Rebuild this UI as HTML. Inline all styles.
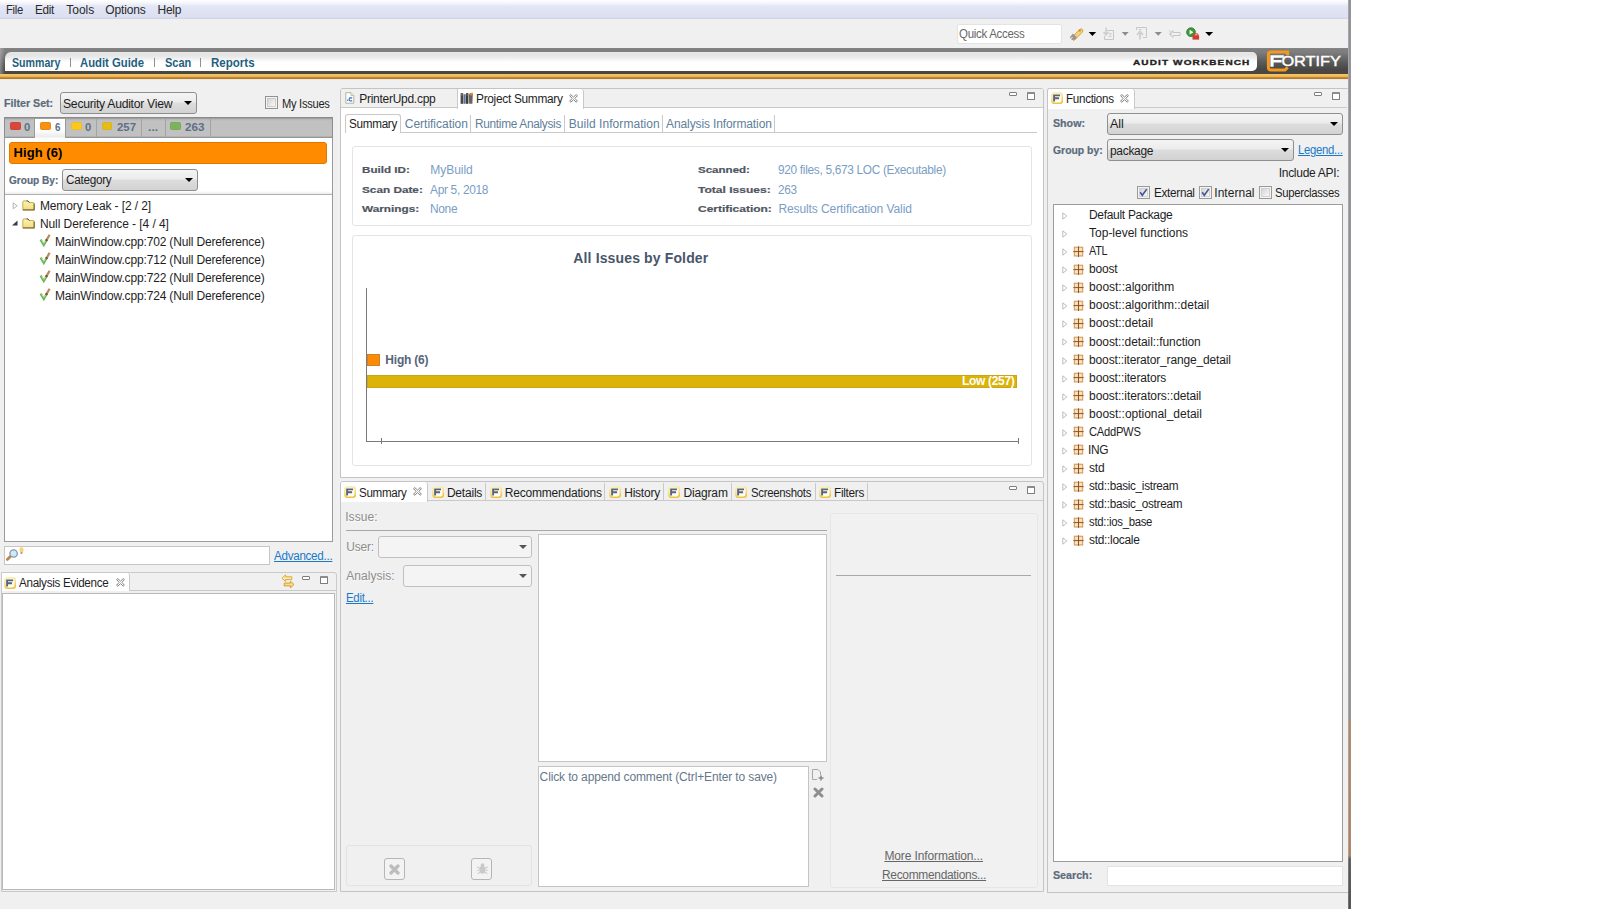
<!DOCTYPE html>
<html><head><meta charset="utf-8">
<style>
*{box-sizing:border-box;margin:0;padding:0}
html,body{width:1620px;height:909px;overflow:hidden;background:#fff}
body{font-family:"Liberation Sans",sans-serif;font-size:12px;color:#1e1e1e;position:relative}
.a{position:absolute}
.t{position:absolute;white-space:nowrap;line-height:14px;height:14px;font-size:12px}
#win{position:absolute;left:0;top:0;width:1348px;height:909px;background:#f0f0f0;overflow:hidden}
.b{font-weight:bold}
.lbl{font-weight:bold;color:#5b6b7b;font-size:10.4px;-webkit-text-stroke:0.2px #5b6b7b}
.sel{position:absolute;border:1px solid #8e8f8f;border-radius:3px;background:linear-gradient(#f4f4f4,#ececec 45%,#dddddd 50%,#d2d2d2)}
.sel .t{left:4px;top:3px;font-size:12.5px}
.sel:after{content:"";position:absolute;right:4px;top:8px;border:4px solid transparent;border-top:4px solid #000;border-bottom:0}
.sel.dis{border-color:#c0c0c0;background:#f4f4f4}
.sel.dis:after{border-top-color:#555}
.ft{font-size:10px;color:#5d6f88}
.sq{width:10.6px;height:7.8px;border:1px solid;border-radius:1.5px}
.dl{color:#8d8d8d;text-shadow:0.6px 0.6px 0 #fbfbfb}
.m{color:#2a2a2a}
.cb{position:absolute;width:13px;height:13px;border:1px solid #8e8f8f;background:linear-gradient(135deg,#dcdcdc,#f8f8f8 60%,#fff)}
.link{color:#1a78c8;text-decoration:underline}
.tabbar{position:absolute;border:1px solid #c9c9c9;border-bottom:none;background:#f0f0f0}
.tab{position:absolute;top:0;height:19px;border-right:1px solid #c9c9c9}
.tab.on{background:#fff}
.val{color:#7a9dc6;font-size:12px}
.il{font-weight:bold;color:#50565f;font-size:9.6px;-webkit-text-stroke:0.2px #50565f}
.mm{position:absolute;width:8px;height:4px;border:1px solid #7e7e7e;border-radius:1px;background:#fff}
.mx{position:absolute;width:8px;height:8px;border:1px solid #7e7e7e;border-top:2px solid #8c8c8c;border-radius:1px;background:#fff}
.tw{position:absolute;width:0;height:0;border:3.5px solid transparent;border-left:4px solid #b0b0b0;border-right:0}
.tw:after{content:"";position:absolute;left:-3px;top:-2px;border:2px solid transparent;border-left:2px solid #fff;border-right:0}
</style></head><body>
<div id="win">
<svg width="0" height="0" style="position:absolute"><defs>
<linearGradient id="fig" x1="0" y1="0" x2="0.25" y2="1"><stop offset="0" stop-color="#fbefbc"/><stop offset="0.55" stop-color="#f8e08c"/><stop offset="1" stop-color="#efc444"/></linearGradient>
<linearGradient id="cbg" x1="0" y1="0" x2="1" y2="1"><stop offset="0" stop-color="#d2d2d2"/><stop offset="1" stop-color="#fbfbfb"/></linearGradient>
<symbol id="fi" viewBox="0 0 12 12"><rect x="0.9" y="0.9" width="10.4" height="10.4" rx="2.6" fill="#fffdf3" stroke="url(#fig)" stroke-width="1.7"/><path d="M3.1 9.4 V3.4 H9.1 M3.1 6.3 H8.1" fill="none" stroke="#596479" stroke-width="1.9"/></symbol>
<symbol id="cx" viewBox="0 0 9 9"><path d="M0.6 1.6 L1.8 0.6 L4.5 3.1 L7.2 0.6 L8.4 1.6 L5.9 4.4 L8.4 7.2 L7.2 8.2 L4.5 5.7 L1.8 8.2 L0.6 7.2 L3.1 4.4 Z" fill="#fff" stroke="#828282" stroke-width="1"/></symbol>
<symbol id="pk" viewBox="0 0 11 11"><rect x="1.3" y="1.2" width="8.4" height="8.8" fill="#f6d3a4" stroke="#d0975a" stroke-width="1"/><path d="M5.5 0.3 V10.9 M0.4 5.6 H10.6" stroke="#8e5526" stroke-width="1"/><path d="M2.3 2.2 H4.7 V4.6 H2.3 Z M6.3 2.2 H8.7 V4.6 H6.3 Z M2.3 6.6 H4.7 V9 H2.3 Z M6.3 6.6 H8.7 V9 H6.3 Z" fill="#fbe6c8"/></symbol>
<symbol id="ar" viewBox="0 0 6 8"><path d="M0.8 0.8 L4.8 4 L0.8 7.2 Z" fill="#fff" stroke="#bdbdbd" stroke-width="1"/></symbol>
</defs></svg>
<!-- MENUBAR -->
<div class="a" id="menubar" style="left:0;top:0;width:1348px;height:19px;background:linear-gradient(#ffffff 0,#f6f7fc 14%,#e4e7f5 32%,#dee2f2 60%,#dce0f0 88%,#cfd3e4 100%)"></div>
<div class="t m" id="m0" style="left:5.8px;top:2.8px;transform-origin:0 50%;transform:scaleX(0.933);letter-spacing:-0.30px">File</div>
<div class="t m" id="m1" style="left:34.7px;top:2.8px;transform-origin:0 50%;transform:scaleX(0.978);letter-spacing:-0.30px">Edit</div>
<div class="t m" id="m2" style="left:66.3px;top:2.8px;letter-spacing:-0.03px">Tools</div>
<div class="t m" id="m3" style="left:105.3px;top:2.8px;letter-spacing:-0.14px">Options</div>
<div class="t m" id="m4" style="left:157.5px;top:2.8px;letter-spacing:-0.27px">Help</div>
<!-- TOOLBAR -->
<div class="a" style="left:957px;top:24px;width:105px;height:20px;background:#fff;border:1px solid #e3e3e3;border-radius:2px"></div>
<div class="t" id="qa" style="left:958.5px;top:27.0px;transform-origin:0 50%;transform:scaleX(0.956);letter-spacing:-0.30px;color:#666">Quick Access</div>
<!-- toolbar icons -->
<svg class="a" id="tbicons" style="left:1064px;top:22px" width="160" height="24" viewBox="0 0 160 24">
<g><path d="M7 16.5 L15.5 7.5 Q17.5 6 18.5 7.5 Q19.5 9 18 10.5 L10 18.5 Z" fill="#f6d27a" stroke="#d9a03c" stroke-width="1"/><path d="M9 11.5 L13 15.5 L10.5 18 L6.5 17 L6 15 Z" fill="#9a9590"/><circle cx="15.8" cy="8.6" r="1.1" fill="#c98a2a"/><path d="M6 17.5 L8.5 15" stroke="#fff" stroke-width="1"/></g>
<path d="M24.7 10 H32.1 L28.4 14 Z" fill="#000"/>
<g stroke="#c6c6c6" fill="none"><path d="M43 8.5 H49.5 V17.5 H40.5 V14"/><path d="M42 5.5 V12 M39.5 10 L42 13 L44.5 10" stroke="#cfcfcf" stroke-width="1.6"/><path d="M45 11.5 H47.5 L45 14.5 H47.5" stroke="#d0d0d0"/></g>
<path d="M57.8 10 H64.7 L61.2 13.8 Z" fill="#8c8c8c"/>
<g stroke="#c6c6c6" fill="none"><path d="M72.5 8 V5.5 H82.5 V15.5 H79"/><path d="M76 17.5 V10.5 M73 13 L76 9.5 L79 13" stroke="#cfcfcf" stroke-width="1.8"/><path d="M74.5 7.5 H77.5" stroke="#d0d0d0"/></g>
<path d="M90.7 10 H97.8 L94.2 13.8 Z" fill="#8c8c8c"/>
<g><path d="M109 8.5 L105.5 12 L109 15.5 V13.5 H116 V10.5 H109 Z" fill="#f2f2f2" stroke="#c4c4c4"/><path d="M105.5 8.5 l1 1.5 l1.6 .2 l-1.2 1.2 l.3 1.7 l-1.7 -.9" fill="none" stroke="#c9c9c9" stroke-width="1"/></g>
<g><circle cx="127" cy="10.2" r="4.4" fill="#3d9a3a" stroke="#2a7a2a" stroke-width=".8"/><path d="M125.6 7.8 L129.4 10.2 L125.6 12.6 Z" fill="#fff"/><rect x="128.5" y="13.2" width="6.6" height="4.4" fill="#d43a30"/><path d="M129.8 13.2 V11.9 H133.8 V13.2" fill="none" stroke="#d43a30" stroke-width="1"/></g>
<path d="M141.2 10 H149.1 L145.1 14 Z" fill="#000"/>
</svg>
<!-- BAND -->
<div class="a" id="band" style="left:0;top:48px;width:1348px;height:26px;background:linear-gradient(90deg,rgba(190,190,190,.55),rgba(120,120,120,0) 5px),linear-gradient(#888 0,#808080 1px,#7e7e7e 4px,#6c6c6c 9px,#585858 15px,#484848 21px,#4a4640 23px,#4a4640 26px)"></div>
<div class="a" style="left:0;top:74px;width:1348px;height:6px;background:linear-gradient(#eec670 0,#f1c062 1.6px,#e9ab42 2.8px,#bb8026 3.8px,#a9783a 4.6px,#efe4d6 5.2px,#f0eeea 6px)"></div>
<div class="a" style="left:5px;top:52px;width:1252px;height:19px;background:linear-gradient(#e9e9e9 0,#e3e3e3 2.5px,#ededed 6px,#fbfbfb 9px,#fff 10.5px);border-radius:6px 5px 5px 0"></div>
<div class="t b nav sx" id="nav1" style="left:12.3px;top:55.7px;transform-origin:0 50%;transform:scaleX(0.885);color:#1f5f80">Summary</div>
<div class="a" style="left:70px;top:58px;width:1px;height:9px;background:#909090"></div>
<div class="t b nav sx" id="nav2" style="left:80.4px;top:55.7px;transform-origin:0 50%;transform:scaleX(0.941);color:#1f5f80">Audit Guide</div>
<div class="a" style="left:154px;top:58px;width:1px;height:9px;background:#909090"></div>
<div class="t b nav sx" id="nav3" style="left:165.0px;top:55.7px;transform-origin:0 50%;transform:scaleX(0.917);color:#1f5f80">Scan</div>
<div class="a" style="left:200px;top:58px;width:1px;height:9px;background:#909090"></div>
<div class="t b nav sx" id="nav4" style="left:210.8px;top:55.7px;transform-origin:0 50%;transform:scaleX(0.961);color:#1f5f80">Reports</div>
<div class="t b" id="awb" style="left:1132.6px;top:55.6px;font-size:8px;letter-spacing:0.9px;color:#222;-webkit-text-stroke:0.35px #222;transform-origin:0 50%;transform:scaleX(1.25)">AUDIT WORKBENCH</div>
<!-- fortify logo -->
<svg class="a" style="left:1264px;top:48px" width="84" height="26" viewBox="0 0 84 26">
<path d="M23.6 7 V4 H7 Q4.4 4 4.4 6.6 V19.4 Q4.4 22 7 22 H21 L23.6 19.4" fill="none" stroke="#f39a1e" stroke-width="3"/>
<path d="M6.4 18.7 V7.2 H19.8 V9.8 H9.6 V12 H17.6 V14.4 H9.6 V18.7 Z" fill="#fff"/>
<text x="17.4" y="18.4" font-family="Liberation Sans" font-size="14" fill="#fff" textLength="59.5" lengthAdjust="spacingAndGlyphs" stroke="#fff" stroke-width="0.4">ORTIFY</text>
</svg>
<!-- LEFT PANEL -->
<div class="t lbl" id="fs" style="left:4.2px;top:96.7px;transform-origin:0 50%;transform:scaleX(1.026)">Filter Set:</div>
<div class="sel" style="left:60px;top:92px;width:137px;height:22px"><div class="t" id="s1" style="left:2.0px;top:4.2px;transform-origin:0 50%;transform:scaleX(0.979);letter-spacing:-0.30px">Security Auditor View</div></div>
<svg class="a" style="left:265px;top:96px" width="13" height="13" viewBox="0 0 13 13"><rect x="0.5" y="0.5" width="12" height="12" fill="#f4f4f4" stroke="#929292"/><rect x="2.5" y="2.5" width="8" height="8" fill="url(#cbg)" stroke="#c4c4c4" stroke-width=".8"/></svg>
<div class="t" id="myi" style="left:281.6px;top:97.0px;transform-origin:0 50%;transform:scaleX(0.928);letter-spacing:-0.30px">My Issues</div>
<!-- folder tabs -->
<div class="a" style="left:4px;top:117px;width:329px;height:21px;background:linear-gradient(#858585 0,#8e8e8e 1px,#b4b4b4 2px,#c1c1c1 4px,#c1c1c1 19px,#a2a2a2 20px,#8c8c8c 21px);border-left:1px solid #8e8e8e;border-right:1px solid #8e8e8e"></div>
<div class="a" style="left:35px;top:119px;width:30px;height:20px;background:linear-gradient(#fff 0,#fff 55%,#ededed 88%,#fff 100%)"></div>
<div class="a" style="left:34px;top:119px;width:1px;height:18px;background:#9a9a9a"></div>
<div class="a" style="left:65px;top:119px;width:1px;height:18px;background:#9a9a9a"></div>
<div class="a" style="left:96px;top:119px;width:1px;height:18px;background:#a4a4a4"></div>
<div class="a" style="left:141px;top:119px;width:1px;height:18px;background:#a4a4a4"></div>
<div class="a" style="left:165px;top:119px;width:1px;height:18px;background:#a4a4a4"></div>
<div class="a" style="left:210px;top:119px;width:1px;height:18px;background:#a4a4a4"></div>
<div class="a sq" style="left:10px;top:122px;background:#d9473b;border-color:#c8463c"></div>
<div class="t b ft sx" id="f0" style="left:23.7px;top:120.5px;transform-origin:0 50%;transform:scaleX(1.117)">0</div>
<div class="a sq" style="left:40.3px;top:122px;background:#fb8f0e;border-color:#e48a1a"></div>
<div class="t b ft sx" id="f1" style="left:55.0px;top:120.5px;transform-origin:0 50%;transform:scaleX(0.983)">6</div>
<div class="a sq" style="left:71.2px;top:122px;background:#fdc81c;border-color:#e9bd2c"></div>
<div class="t b ft sx" id="f2" style="left:85.0px;top:120.5px;transform-origin:0 50%;transform:scaleX(1.117)">0</div>
<div class="a sq" style="left:101.6px;top:122px;background:#e5bd12;border-color:#d5b32a"></div>
<div class="t b ft sx" id="f3" style="left:116.5px;top:120.5px;transform-origin:0 50%;transform:scaleX(1.139)">257</div>
<div class="t b ft sx" id="f4" style="left:148.0px;top:120.5px;transform-origin:0 50%;transform:scaleX(1.215)">...</div>
<div class="a sq" style="left:170.2px;top:122px;background:#7cb45c;border-color:#7aa860"></div>
<div class="t b ft sx" id="f5" style="left:185.3px;top:120.5px;transform-origin:0 50%;transform:scaleX(1.162)">263</div>
<!-- body -->
<div class="a" style="left:4px;top:138px;width:329px;height:404px;background:#fff;border:1px solid #9a9a9a;border-top:none"></div>
<div class="a" style="left:9px;top:142px;width:318px;height:22px;background:#ff8c00;border:1px solid #e07800;border-radius:3px"></div>
<div class="t b" id="high" style="left:13.6px;top:145.5px;letter-spacing:0.04px;font-size:13px;color:#000">High (6)</div>
<div class="t lbl" id="gb" style="left:8.8px;top:173.5px;transform-origin:0 50%;transform:scaleX(0.971)">Group By:</div>
<div class="sel" style="left:62px;top:169px;width:136px;height:22px"><div class="t" id="s2" style="left:2.5px;top:3.3px;transform-origin:0 50%;transform:scaleX(0.940);letter-spacing:-0.30px">Category</div></div>
<div class="a" style="left:5px;top:194px;width:327px;height:1px;background:#b0b0b0"></div>
<div class="a" style="left:5px;top:191px;width:327px;height:3px;background:linear-gradient(#fff,#ececec)"></div>
<!-- tree -->
<svg class="a" style="left:12px;top:202px" width="7" height="8" viewBox="0 0 7 8"><path d="M1.2 0.8 L5.2 3.8 L1.2 6.8 Z" fill="#fff" stroke="#b4b4b4" stroke-width="1"/></svg>
<svg class="a" style="left:11px;top:220px" width="8" height="7" viewBox="0 0 8 7"><path d="M6.5 0.6 V5.4 H1 Z" fill="#3a3a3a"/></svg>
<svg class="a fold" style="left:22px;top:199.6px" width="13" height="11" viewBox="0 0 14 12"><defs><linearGradient id="fg1" x1="0" y1="0" x2="0" y2="1"><stop offset="0" stop-color="#fdf3b4"/><stop offset="1" stop-color="#f1dc80"/></linearGradient></defs><path d="M0.8 2.2 Q0.8 1 2 1 H6.2 L8 2.8 H12 Q13 2.8 13 3.8 V10.6 H0.8 Z" fill="url(#fg1)" stroke="#c4a548" stroke-width="1"/><path d="M0.8 10.8 H13.2 V3.8" fill="none" stroke="#6e5a28" stroke-width="1.1"/><path d="M5 1 H6.2 L8 2.8" fill="none" stroke="#4a3c1c" stroke-width="1"/></svg>
<svg class="a fold" style="left:22px;top:217.6px" width="13" height="11" viewBox="0 0 14 12"><defs><linearGradient id="fg2" x1="0" y1="0" x2="0" y2="1"><stop offset="0" stop-color="#fdf3b4"/><stop offset="1" stop-color="#f1dc80"/></linearGradient></defs><path d="M0.8 2.2 Q0.8 1 2 1 H6.2 L8 2.8 H12 Q13 2.8 13 3.8 V10.6 H0.8 Z" fill="url(#fg2)" stroke="#c4a548" stroke-width="1"/><path d="M0.8 10.8 H13.2 V3.8" fill="none" stroke="#6e5a28" stroke-width="1.1"/><path d="M5 1 H6.2 L8 2.8" fill="none" stroke="#4a3c1c" stroke-width="1"/></svg>
<div class="t tr" id="tr1" style="left:39.9px;top:199.0px;letter-spacing:-0.11px">Memory Leak - [2 / 2]</div>
<div class="t tr" id="tr2" style="left:39.9px;top:217.0px;letter-spacing:-0.07px">Null Dereference - [4 / 4]</div>
<div class="t tr" id="tr3" style="left:55.0px;top:235.0px;letter-spacing:-0.16px">MainWindow.cpp:702 (Null Dereference)</div>
<div class="t tr" id="tr4" style="left:55.0px;top:253.0px;letter-spacing:-0.16px">MainWindow.cpp:712 (Null Dereference)</div>
<div class="t tr" id="tr5" style="left:55.0px;top:271.0px;letter-spacing:-0.16px">MainWindow.cpp:722 (Null Dereference)</div>
<div class="t tr" id="tr6" style="left:55.0px;top:289.0px;letter-spacing:-0.16px">MainWindow.cpp:724 (Null Dereference)</div>
<svg class="a" style="left:39px;top:234px" width="13" height="68" viewBox="0 0 13 68">
<g id="ck"><path d="M1.6 5.6 L4.8 11 L8 5.2" fill="none" stroke="#6cb556" stroke-width="2.3" stroke-linejoin="miter"/><path d="M2.6 6.2 L4.8 9.4 L7 5.8" fill="none" stroke="#b9e4a6" stroke-width="1"/><path d="M7.4 6.4 L10.6 0.8" stroke="#bd8756" stroke-width="2.2"/><path d="M7 7 L8 5.4" stroke="#6a5040" stroke-width="2.2"/></g>
<use href="#ck" y="18"/><use href="#ck" y="36"/><use href="#ck" y="54"/>
</svg>
<!-- search -->
<div class="a" style="left:4px;top:546px;width:266px;height:19px;background:#fff;border:1px solid #c6c6c6"></div>
<svg class="a" style="left:4px;top:546px" width="22" height="18" viewBox="0 0 22 18"><path d="M6.4 10.4 L3.3 13.4" stroke="#bd8650" stroke-width="2.8" stroke-linecap="round"/><circle cx="9.6" cy="7.5" r="3.7" fill="#cdeaf8" stroke="#8898a8" stroke-width="1.3"/><path d="M17.5 1.2 Q20 2.2 19 5 L18.5 6.2 H16.5 L16 5 Q15 2.2 17.5 1.2 Z" fill="#fbd777" stroke="#e8c060" stroke-width=".5"/><rect x="16.6" y="6.2" width="1.8" height="1.6" fill="#8a8a92"/></svg>
<div class="t link" id="adv" style="left:274.3px;top:549.4px;transform-origin:0 50%;transform:scaleX(0.971);letter-spacing:-0.30px">Advanced...</div>
<!-- Analysis Evidence -->
<div class="a" style="left:1px;top:572px;width:336px;height:320px;border:1px solid #c9c9c9;border-radius:0 3px 0 0;background:#f0f0f0"></div>
<div class="a" style="left:2px;top:573px;width:128px;height:18px;background:#fff;border-right:1px solid #c9c9c9;border-radius:0 3px 0 0"></div>
<div class="a" style="left:130px;top:590px;width:206px;height:1px;background:#c9c9c9"></div>
<svg class="a" style="left:4px;top:576.5px" width="12" height="12"><use href="#fi"/></svg>
<div class="t" id="ae" style="left:19.2px;top:575.6px;transform-origin:0 50%;transform:scaleX(0.969);letter-spacing:-0.30px">Analysis Evidence</div>
<svg class="a" style="left:115.5px;top:578px" width="9" height="9"><use href="#cx"/></svg>
<div class="a" style="left:2px;top:593px;width:333px;height:297px;background:#fff;border:1px solid #b9b9b9"></div>
<svg class="a" style="left:281px;top:574px" width="14" height="15" viewBox="0 0 14 15"><path d="M1 4.2 L4.6 0.9 V2.8 H10.8 V5.6 H4.6 V7.5 Z" fill="#fde9ae" stroke="#dba93f" stroke-width="1"/><path d="M13 10.5 L9.4 7.2 V9.1 H3.2 V11.9 H9.4 V13.8 Z" fill="#fbd98a" stroke="#d39e36" stroke-width="1"/></svg>
<div class="mm" style="left:302px;top:576px"></div>
<div class="mx" style="left:320px;top:576px"></div>
<!-- CENTER TOP PANEL -->
<div class="a" style="left:340px;top:88px;width:704px;height:390px;border:1px solid #c4c4c4;border-radius:3px 3px 0 0;background:#fff"></div>
<div class="a" style="left:341px;top:89px;width:702px;height:19px;background:#f0f0f0;border-bottom:1px solid #c9c9c9;border-radius:2px 2px 0 0"></div>
<div class="a" style="left:457px;top:89px;width:127px;height:20px;background:#fff;border-left:1px solid #c9c9c9;border-right:1px solid #c9c9c9;border-radius:0 3px 0 0"></div>
<svg class="a" style="left:344.6px;top:92px" width="10" height="12" viewBox="0 0 10 12"><path d="M0.8 0.7 H6 L8.8 3.5 V11.2 H0.8 Z" fill="#fff" stroke="#b9b0a0" stroke-width="1"/><path d="M6 0.7 V3.5 H8.8" fill="#f2ede2" stroke="#b9b0a0" stroke-width=".8"/><rect x="2" y="7.6" width="1.3" height="1.3" fill="#3d7cc9"/><path d="M7.2 6.1 Q4.2 5 4.2 7.3 Q4.2 9.6 7.2 8.6" fill="none" stroke="#3d7cc9" stroke-width="1.3"/></svg>
<div class="t" id="ct1" style="left:359.3px;top:91.6px;letter-spacing:-0.28px">PrinterUpd.cpp</div>
<svg class="a" style="left:459.5px;top:91.5px" width="14" height="13" viewBox="0 0 14 13"><rect x="0.6" y="1.2" width="2.6" height="10.6" fill="#474747"/><rect x="3.5" y="2.2" width="2.2" height="9.6" fill="#5f7099"/><rect x="6" y="1.2" width="2.4" height="10.6" fill="#3b3b3b"/><path d="M8.8 2.6 L11 1 L12.8 1.6 L12.4 11.8 L9.2 11.8 Z" fill="#6b6258"/><path d="M9.4 1.4 L12.6 0.6 L12.8 3.4 L10.4 3.6 Z" fill="#d08a3c"/><rect x="1.1" y="2.4" width="1.6" height="1" fill="#8a8a8a"/><rect x="6.4" y="2.4" width="1.6" height="1" fill="#8a6a4a"/></svg>
<div class="t" id="ct2" style="left:476.4px;top:91.6px;transform-origin:0 50%;transform:scaleX(0.990);letter-spacing:-0.30px">Project Summary</div>
<svg class="a" style="left:569px;top:94px" width="9" height="9"><use href="#cx"/></svg>
<div class="mm" style="left:1009px;top:92px"></div>
<div class="mx" style="left:1027px;top:92px"></div>
<!-- inner tabs -->
<div class="a" style="left:345px;top:132px;width:692px;height:1px;background:#c9c9c9"></div>
<div class="a" style="left:345px;top:114px;width:56px;height:19px;background:#fff;border:1px solid #c9c9c9;border-bottom:none;border-radius:3px 3px 0 0"></div>
<div class="a" style="left:470px;top:115px;width:1px;height:17px;background:#c9c9c9"></div>
<div class="a" style="left:564px;top:115px;width:1px;height:17px;background:#c9c9c9"></div>
<div class="a" style="left:662px;top:115px;width:1px;height:17px;background:#c9c9c9"></div>
<div class="a" style="left:774px;top:115px;width:1px;height:17px;background:#c9c9c9"></div>
<div class="t it" id="it1" style="left:349.4px;top:116.6px;transform-origin:0 50%;transform:scaleX(0.975);letter-spacing:-0.30px;color:#222">Summary</div>
<div class="t it" id="it2" style="left:404.8px;top:116.6px;letter-spacing:-0.02px;color:#60809a">Certification</div>
<div class="t it" id="it3" style="left:474.9px;top:116.6px;transform-origin:0 50%;transform:scaleX(0.986);letter-spacing:-0.30px;color:#60809a">Runtime Analysis</div>
<div class="t it" id="it4" style="left:568.7px;top:116.6px;letter-spacing:0.06px;color:#60809a">Build Information</div>
<div class="t it" id="it5" style="left:666.1px;top:116.6px;letter-spacing:-0.12px;color:#60809a">Analysis Information</div>
<!-- info box -->
<div class="a" style="left:352px;top:146px;width:680px;height:80px;border:1px solid #e4e4e4;border-radius:3px;background:#fff"></div>
<div class="t il" id="il1" style="left:362.1px;top:162.7px;transform-origin:0 50%;transform:scaleX(1.211)">Build ID:</div>
<div class="t il" id="il2" style="left:362.1px;top:182.6px;transform-origin:0 50%;transform:scaleX(1.227)">Scan Date:</div>
<div class="t il" id="il3" style="left:362.1px;top:202.4px;transform-origin:0 50%;transform:scaleX(1.228)">Warnings:</div>
<div class="t val" id="v1" style="left:430.3px;top:163.0px;letter-spacing:-0.03px">MyBuild</div>
<div class="t val" id="v2" style="left:430.3px;top:182.6px;transform-origin:0 50%;transform:scaleX(0.990);letter-spacing:-0.30px">Apr 5, 2018</div>
<div class="t val" id="v3" style="left:430.3px;top:202.4px;transform-origin:0 50%;transform:scaleX(0.992);letter-spacing:-0.30px">None</div>
<div class="t il" id="il4" style="left:698.2px;top:162.7px;transform-origin:0 50%;transform:scaleX(1.203)">Scanned:</div>
<div class="t il" id="il5" style="left:698.2px;top:182.6px;transform-origin:0 50%;transform:scaleX(1.256)">Total Issues:</div>
<div class="t il" id="il6" style="left:698.2px;top:202.4px;transform-origin:0 50%;transform:scaleX(1.248)">Certification:</div>
<div class="t val" id="v4" style="left:778.4px;top:163.0px;transform-origin:0 50%;transform:scaleX(0.986);letter-spacing:-0.30px">920 files, 5,673 LOC (Executable)</div>
<div class="t val" id="v5" style="left:778.4px;top:182.6px;transform-origin:0 50%;transform:scaleX(0.977);letter-spacing:-0.30px">263</div>
<div class="t val" id="v6" style="left:778.4px;top:202.4px;letter-spacing:-0.09px">Results Certification Valid</div>
<!-- chart box -->
<div class="a" style="left:352px;top:235px;width:680px;height:231px;border:1px solid #e4e4e4;border-radius:3px;background:#fff"></div>
<div class="t b" id="ctitle" style="left:573.3px;top:250.7px;letter-spacing:0.14px;font-size:14px;color:#48566a">All Issues by Folder</div>
<div class="a" style="left:366px;top:288px;width:1px;height:154px;background:#7a7a7a"></div>
<div class="a" style="left:366px;top:441px;width:653px;height:1px;background:#7a7a7a"></div>
<div class="a" style="left:381px;top:438px;width:1px;height:6px;background:#7a7a7a"></div>
<div class="a" style="left:1018px;top:438px;width:1px;height:6px;background:#7a7a7a"></div>
<div class="a" style="left:366.5px;top:354px;width:13.5px;height:12px;background:#fb8a06;border:1px solid #d0802a"></div>
<div class="t b" id="hl" style="left:385.3px;top:352.9px;letter-spacing:-0.21px;color:#56657a">High (6)</div>
<div class="a" style="left:366.5px;top:375px;width:650.5px;height:12.5px;background:#dcb408;border:1px solid #c9a51a"></div>
<div class="t b" id="ll" style="left:961.9px;top:374.0px;transform-origin:0 50%;transform:scaleX(0.997);letter-spacing:-0.30px;color:#fff">Low (257)</div>
<!-- CENTER BOTTOM PANEL -->
<div class="a" style="left:340px;top:481px;width:704px;height:411px;border:1px solid #c4c4c4;border-radius:3px 3px 0 0;background:#f0f0f0"></div>
<div class="a" style="left:341px;top:500px;width:702px;height:1px;background:#c9c9c9"></div>
<div class="a" style="left:341px;top:482px;width:87px;height:20px;background:#fff;border-right:1px solid #c9c9c9;border-radius:2px 3px 0 0"></div>
<div class="a" style="left:485px;top:483px;width:1px;height:17px;background:#c9c9c9"></div>
<div class="a" style="left:604px;top:483px;width:1px;height:17px;background:#c9c9c9"></div>
<div class="a" style="left:663px;top:483px;width:1px;height:17px;background:#c9c9c9"></div>
<div class="a" style="left:731px;top:483px;width:1px;height:17px;background:#c9c9c9"></div>
<div class="a" style="left:815px;top:483px;width:1px;height:17px;background:#c9c9c9"></div>
<div class="a" style="left:867px;top:483px;width:1px;height:17px;background:#c9c9c9"></div>
<svg class="a" style="left:344px;top:486px" width="12" height="12"><use href="#fi"/></svg>
<svg class="a" style="left:432px;top:486px" width="12" height="12"><use href="#fi"/></svg>
<svg class="a" style="left:490px;top:486px" width="12" height="12"><use href="#fi"/></svg>
<svg class="a" style="left:609px;top:486px" width="12" height="12"><use href="#fi"/></svg>
<svg class="a" style="left:668px;top:486px" width="12" height="12"><use href="#fi"/></svg>
<svg class="a" style="left:735px;top:486px" width="12" height="12"><use href="#fi"/></svg>
<svg class="a" style="left:819px;top:486px" width="12" height="12"><use href="#fi"/></svg>
<div class="t bt" id="bt1" style="left:359.0px;top:485.9px;transform-origin:0 50%;transform:scaleX(0.967);letter-spacing:-0.30px">Summary</div>
<svg class="a" style="left:413px;top:487px" width="9" height="9"><use href="#cx"/></svg>
<div class="t bt" id="bt2" style="left:446.9px;top:485.9px;letter-spacing:-0.20px">Details</div>
<div class="t bt" id="bt3" style="left:504.7px;top:485.9px;letter-spacing:-0.20px">Recommendations</div>
<div class="t bt" id="bt4" style="left:624.2px;top:485.9px;letter-spacing:-0.22px">History</div>
<div class="t bt" id="bt5" style="left:683.4px;top:485.9px;letter-spacing:-0.14px">Diagram</div>
<div class="t bt" id="bt6" style="left:750.8px;top:485.9px;transform-origin:0 50%;transform:scaleX(0.948);letter-spacing:-0.30px">Screenshots</div>
<div class="t bt" id="bt7" style="left:833.8px;top:485.9px;transform-origin:0 50%;transform:scaleX(0.982);letter-spacing:-0.30px">Filters</div>
<div class="mm" style="left:1009px;top:486px"></div>
<div class="mx" style="left:1027px;top:486px"></div>
<div class="t dl" id="dl1" style="left:345.2px;top:510.0px;letter-spacing:0.08px">Issue:</div>
<div class="a" style="left:346px;top:530px;width:481px;height:1px;background:#a8a8a8"></div>
<div class="t dl" id="dl2" style="left:346.2px;top:540.1px;letter-spacing:-0.18px">User:</div>
<div class="sel dis" style="left:378px;top:536px;width:154px;height:22px"></div>
<div class="t dl" id="dl3" style="left:346.2px;top:568.9px;letter-spacing:0.05px">Analysis:</div>
<div class="sel dis" style="left:403px;top:565px;width:129px;height:22px"></div>
<div class="t link" id="edit" style="left:346.2px;top:591.4px;transform-origin:0 50%;transform:scaleX(0.956);letter-spacing:-0.30px">Edit...</div>
<div class="a" style="left:538px;top:534px;width:289px;height:228px;background:#fff;border:1px solid #c4c4c4"></div>
<div class="a" style="left:538px;top:766px;width:271px;height:121px;background:#fff;border:1px solid #c4c4c4"></div>
<div class="t" id="cm" style="left:539.6px;top:769.6px;letter-spacing:-0.13px;color:#66788a">Click to append comment (Ctrl+Enter to save)</div>
<svg class="a" style="left:811px;top:768px" width="14" height="14" viewBox="0 0 14 14"><path d="M1.5 1.5 H7 L9.5 4 V7 M1.5 1.5 V11.5 H6" fill="none" stroke="#a8a8a8"/><path d="M10 7.5 V12.5 M7.5 10 H12.5" stroke="#8a8a8a" stroke-width="1.6"/></svg>
<svg class="a" style="left:812.5px;top:786.5px" width="11" height="11" viewBox="0 0 11 11"><path d="M2 2 L9 9 M9 2 L2 9" stroke="#8e8e8e" stroke-width="3" stroke-linecap="round"/></svg>
<!-- buttons area -->
<div class="a" style="left:346px;top:845px;width:186px;height:41px;border:1px solid #e3e3e3;border-radius:3px"></div>
<div class="a" style="left:384px;top:858px;width:21px;height:22px;border:1px solid #b6b6b6;border-radius:3px;background:#f3f3f3"></div>
<svg class="a" style="left:389px;top:864px" width="11" height="11" viewBox="0 0 11 11"><path d="M2 2 L9 9 M9 2 L2 9" stroke="#bcbcbc" stroke-width="3.2" stroke-linecap="round"/></svg>
<div class="a" style="left:471px;top:858px;width:21px;height:22px;border:1px solid #b6b6b6;border-radius:3px;background:#f3f3f3"></div>
<svg class="a" style="left:475.5px;top:862px" width="13" height="13" viewBox="0 0 11 11"><ellipse cx="5.5" cy="6.5" rx="2.6" ry="3.4" fill="#c9c9c9"/><circle cx="5.5" cy="2.6" r="1.6" fill="#c9c9c9"/><path d="M1 4 L3.5 5.5 M10 4 L7.5 5.5 M0.8 7 H3 M10.2 7 H8 M1.5 10 L3.5 8.5 M9.5 10 L7.5 8.5" stroke="#cfcfcf"/></svg>
<!-- right subpanel -->
<div class="a" style="left:830px;top:513px;width:208px;height:375px;border:1px solid #e6e6e6;border-radius:3px;background:#f1f1f1"></div>
<div class="a" style="left:836px;top:575px;width:195px;height:1px;background:#a8a8a8"></div>
<div class="t" id="mi" style="left:884.4px;top:849.0px;letter-spacing:-0.11px;color:#666;text-decoration:underline">More Information...</div>
<div class="t" id="rc" style="left:881.5px;top:868.2px;transform-origin:0 50%;transform:scaleX(0.995);letter-spacing:-0.30px;color:#666;text-decoration:underline">Recommendations...</div>
<!-- RIGHT PANEL -->
<div class="a" style="left:1047px;top:88px;width:302px;height:805px;border:1px solid #c4c4c4;border-right:none;border-radius:3px 3px 0 0;background:#f0f0f0"></div>
<div class="a" style="left:1048px;top:107px;width:299px;height:1px;background:#c9c9c9"></div>
<div class="a" style="left:1048px;top:89px;width:87px;height:20px;background:#fff;border-right:1px solid #c9c9c9;border-radius:2px 3px 0 0"></div>
<svg class="a" style="left:1051px;top:92px" width="12" height="12"><use href="#fi"/></svg>
<div class="t" id="fn" style="left:1066.4px;top:91.6px;transform-origin:0 50%;transform:scaleX(0.967);letter-spacing:-0.30px">Functions</div>
<svg class="a" style="left:1120px;top:94px" width="9" height="9"><use href="#cx"/></svg>
<div class="mm" style="left:1314px;top:92px"></div>
<div class="mx" style="left:1332px;top:92px"></div>
<div class="t lbl" id="show" style="left:1053.1px;top:117.2px;transform-origin:0 50%;transform:scaleX(1.026)">Show:</div>
<div class="sel" style="left:1107px;top:113px;width:236px;height:22px"><div class="t" id="s3" style="left:2.0px;top:3.0px;letter-spacing:-0.06px">All</div></div>
<div class="t lbl" id="gby" style="left:1053.1px;top:143.6px;transform-origin:0 50%;transform:scaleX(1.002)">Group by:</div>
<div class="sel" style="left:1107px;top:139px;width:187px;height:22px"><div class="t" id="s4" style="left:2.0px;top:3.5px;transform-origin:0 50%;transform:scaleX(0.956);letter-spacing:-0.30px">package</div></div>
<div class="t link" id="leg" style="left:1297.9px;top:142.9px;transform-origin:0 50%;transform:scaleX(0.943);letter-spacing:-0.30px">Legend...</div>
<div class="t" id="inc" style="left:1278.7px;top:165.8px;letter-spacing:-0.28px">Include API:</div>
<svg class="a" style="left:1137px;top:186px" width="13" height="13" viewBox="0 0 13 13"><rect x="0.5" y="0.5" width="12" height="12" fill="#f4f4f4" stroke="#9a9a9a"/><rect x="2.5" y="2.5" width="8" height="8" fill="url(#cbg)" stroke="#cbcbcb" stroke-width=".8"/><path d="M3.2 6.3 L5.3 9.3 L9.7 3.1" fill="none" stroke="#42569a" stroke-width="1.6"/></svg>
<div class="t" id="ext" style="left:1153.5px;top:185.9px;transform-origin:0 50%;transform:scaleX(0.977);letter-spacing:-0.30px">External</div>
<svg class="a" style="left:1199px;top:186px" width="13" height="13" viewBox="0 0 13 13"><rect x="0.5" y="0.5" width="12" height="12" fill="#f4f4f4" stroke="#9a9a9a"/><rect x="2.5" y="2.5" width="8" height="8" fill="url(#cbg)" stroke="#cbcbcb" stroke-width=".8"/><path d="M3.2 6.3 L5.3 9.3 L9.7 3.1" fill="none" stroke="#42569a" stroke-width="1.6"/></svg>
<div class="t" id="int" style="left:1214.3px;top:185.9px;letter-spacing:0.03px">Internal</div>
<svg class="a" style="left:1259px;top:186px" width="13" height="13" viewBox="0 0 13 13"><rect x="0.5" y="0.5" width="12" height="12" fill="#f4f4f4" stroke="#9a9a9a"/><rect x="2.5" y="2.5" width="8" height="8" fill="url(#cbg)" stroke="#cbcbcb" stroke-width=".8"/></svg>
<div class="t" id="sup" style="left:1275.0px;top:185.9px;transform-origin:0 50%;transform:scaleX(0.940);letter-spacing:-0.30px">Superclasses</div>
<div class="a" style="left:1053px;top:204px;width:290px;height:658px;background:#fff;border:1px solid #9c9c9c"></div>
<svg class="a" style="left:1062px;top:211.9px" width="6" height="8"><use href="#ar"/></svg>
<div class="t fr" id="fr0" style="left:1089.1px;top:208.0px;transform-origin:0 50%;transform:scaleX(0.999);letter-spacing:-0.30px">Default Package</div>
<svg class="a" style="left:1062px;top:230.0px" width="6" height="8"><use href="#ar"/></svg>
<div class="t fr" id="fr1" style="left:1089.1px;top:226.1px;letter-spacing:-0.02px">Top-level functions</div>
<svg class="a" style="left:1062px;top:248.0px" width="6" height="8"><use href="#ar"/></svg>
<svg class="a" style="left:1073.2px;top:245.6px" width="11" height="11"><use href="#pk"/></svg>
<div class="t fr" id="fr2" style="left:1089.1px;top:244.1px;transform-origin:0 50%;transform:scaleX(0.907);letter-spacing:-0.30px">ATL</div>
<svg class="a" style="left:1062px;top:266.1px" width="6" height="8"><use href="#ar"/></svg>
<svg class="a" style="left:1073.2px;top:263.7px" width="11" height="11"><use href="#pk"/></svg>
<div class="t fr" id="fr3" style="left:1089.1px;top:262.2px;letter-spacing:-0.21px">boost</div>
<svg class="a" style="left:1062px;top:284.2px" width="6" height="8"><use href="#ar"/></svg>
<svg class="a" style="left:1073.2px;top:281.8px" width="11" height="11"><use href="#pk"/></svg>
<div class="t fr" id="fr4" style="left:1089.1px;top:280.3px;letter-spacing:-0.02px">boost::algorithm</div>
<svg class="a" style="left:1062px;top:302.2px" width="6" height="8"><use href="#ar"/></svg>
<svg class="a" style="left:1073.2px;top:299.9px" width="11" height="11"><use href="#pk"/></svg>
<div class="t fr" id="fr5" style="left:1089.1px;top:298.4px;letter-spacing:-0.03px">boost::algorithm::detail</div>
<svg class="a" style="left:1062px;top:320.3px" width="6" height="8"><use href="#ar"/></svg>
<svg class="a" style="left:1073.2px;top:317.9px" width="11" height="11"><use href="#pk"/></svg>
<div class="t fr" id="fr6" style="left:1089.1px;top:316.4px;letter-spacing:-0.05px">boost::detail</div>
<svg class="a" style="left:1062px;top:338.4px" width="6" height="8"><use href="#ar"/></svg>
<svg class="a" style="left:1073.2px;top:336.0px" width="11" height="11"><use href="#pk"/></svg>
<div class="t fr" id="fr7" style="left:1089.1px;top:334.5px;letter-spacing:-0.08px">boost::detail::function</div>
<svg class="a" style="left:1062px;top:356.5px" width="6" height="8"><use href="#ar"/></svg>
<svg class="a" style="left:1073.2px;top:354.1px" width="11" height="11"><use href="#pk"/></svg>
<div class="t fr" id="fr8" style="left:1089.1px;top:352.6px;letter-spacing:-0.16px">boost::iterator_range_detail</div>
<svg class="a" style="left:1062px;top:374.5px" width="6" height="8"><use href="#ar"/></svg>
<svg class="a" style="left:1073.2px;top:372.1px" width="11" height="11"><use href="#pk"/></svg>
<div class="t fr" id="fr9" style="left:1089.1px;top:370.6px;letter-spacing:-0.14px">boost::iterators</div>
<svg class="a" style="left:1062px;top:392.6px" width="6" height="8"><use href="#ar"/></svg>
<svg class="a" style="left:1073.2px;top:390.2px" width="11" height="11"><use href="#pk"/></svg>
<div class="t fr" id="fr10" style="left:1089.1px;top:388.7px;letter-spacing:-0.11px">boost::iterators::detail</div>
<svg class="a" style="left:1062px;top:410.7px" width="6" height="8"><use href="#ar"/></svg>
<svg class="a" style="left:1073.2px;top:408.3px" width="11" height="11"><use href="#pk"/></svg>
<div class="t fr" id="fr11" style="left:1089.1px;top:406.8px;letter-spacing:-0.03px">boost::optional_detail</div>
<svg class="a" style="left:1062px;top:428.7px" width="6" height="8"><use href="#ar"/></svg>
<svg class="a" style="left:1073.2px;top:426.3px" width="11" height="11"><use href="#pk"/></svg>
<div class="t fr" id="fr12" style="left:1089.1px;top:424.8px;transform-origin:0 50%;transform:scaleX(0.934);letter-spacing:-0.30px">CAddPWS</div>
<svg class="a" style="left:1062px;top:446.8px" width="6" height="8"><use href="#ar"/></svg>
<svg class="a" style="left:1073.2px;top:444.4px" width="11" height="11"><use href="#pk"/></svg>
<div class="t fr" id="fr13" style="left:1088.1px;top:442.9px;transform-origin:0 50%;transform:scaleX(0.995);letter-spacing:-0.30px">ING</div>
<svg class="a" style="left:1062px;top:464.9px" width="6" height="8"><use href="#ar"/></svg>
<svg class="a" style="left:1073.2px;top:462.5px" width="11" height="11"><use href="#pk"/></svg>
<div class="t fr" id="fr14" style="left:1089.1px;top:461.0px;letter-spacing:-0.27px">std</div>
<svg class="a" style="left:1062px;top:482.9px" width="6" height="8"><use href="#ar"/></svg>
<svg class="a" style="left:1073.2px;top:480.6px" width="11" height="11"><use href="#pk"/></svg>
<div class="t fr" id="fr15" style="left:1089.1px;top:479.1px;transform-origin:0 50%;transform:scaleX(0.977);letter-spacing:-0.30px">std::basic_istream</div>
<svg class="a" style="left:1062px;top:501.0px" width="6" height="8"><use href="#ar"/></svg>
<svg class="a" style="left:1073.2px;top:498.6px" width="11" height="11"><use href="#pk"/></svg>
<div class="t fr" id="fr16" style="left:1089.1px;top:497.1px;transform-origin:0 50%;transform:scaleX(0.977);letter-spacing:-0.30px">std::basic_ostream</div>
<svg class="a" style="left:1062px;top:519.1px" width="6" height="8"><use href="#ar"/></svg>
<svg class="a" style="left:1073.2px;top:516.7px" width="11" height="11"><use href="#pk"/></svg>
<div class="t fr" id="fr17" style="left:1089.1px;top:515.2px;transform-origin:0 50%;transform:scaleX(0.945);letter-spacing:-0.30px">std::ios_base</div>
<svg class="a" style="left:1062px;top:537.2px" width="6" height="8"><use href="#ar"/></svg>
<svg class="a" style="left:1073.2px;top:534.8px" width="11" height="11"><use href="#pk"/></svg>
<div class="t fr" id="fr18" style="left:1089.1px;top:533.3px;transform-origin:0 50%;transform:scaleX(0.995);letter-spacing:-0.30px">std::locale</div>
<div class="t lbl" id="srch" style="left:1053.2px;top:869.2px;transform-origin:0 50%;transform:scaleX(1.028)">Search:</div>
<div class="a" style="left:1107px;top:866px;width:236px;height:20px;background:#fff;border:1px solid #e3e3e3"></div>
</div>
<!-- window right edge -->
<div class="a" style="left:1348px;top:0;width:3px;height:909px;background:linear-gradient(90deg,rgba(255,255,255,.32),rgba(255,255,255,0) 45%,rgba(255,255,255,0) 75%,rgba(255,255,255,.15)),linear-gradient(#8e9096 0,#929292 79.1%,#a88a74 79.4%,#a88468 94.1%,#5c5c5c 94.5%,#4e4e4e)"></div>
</body></html>
